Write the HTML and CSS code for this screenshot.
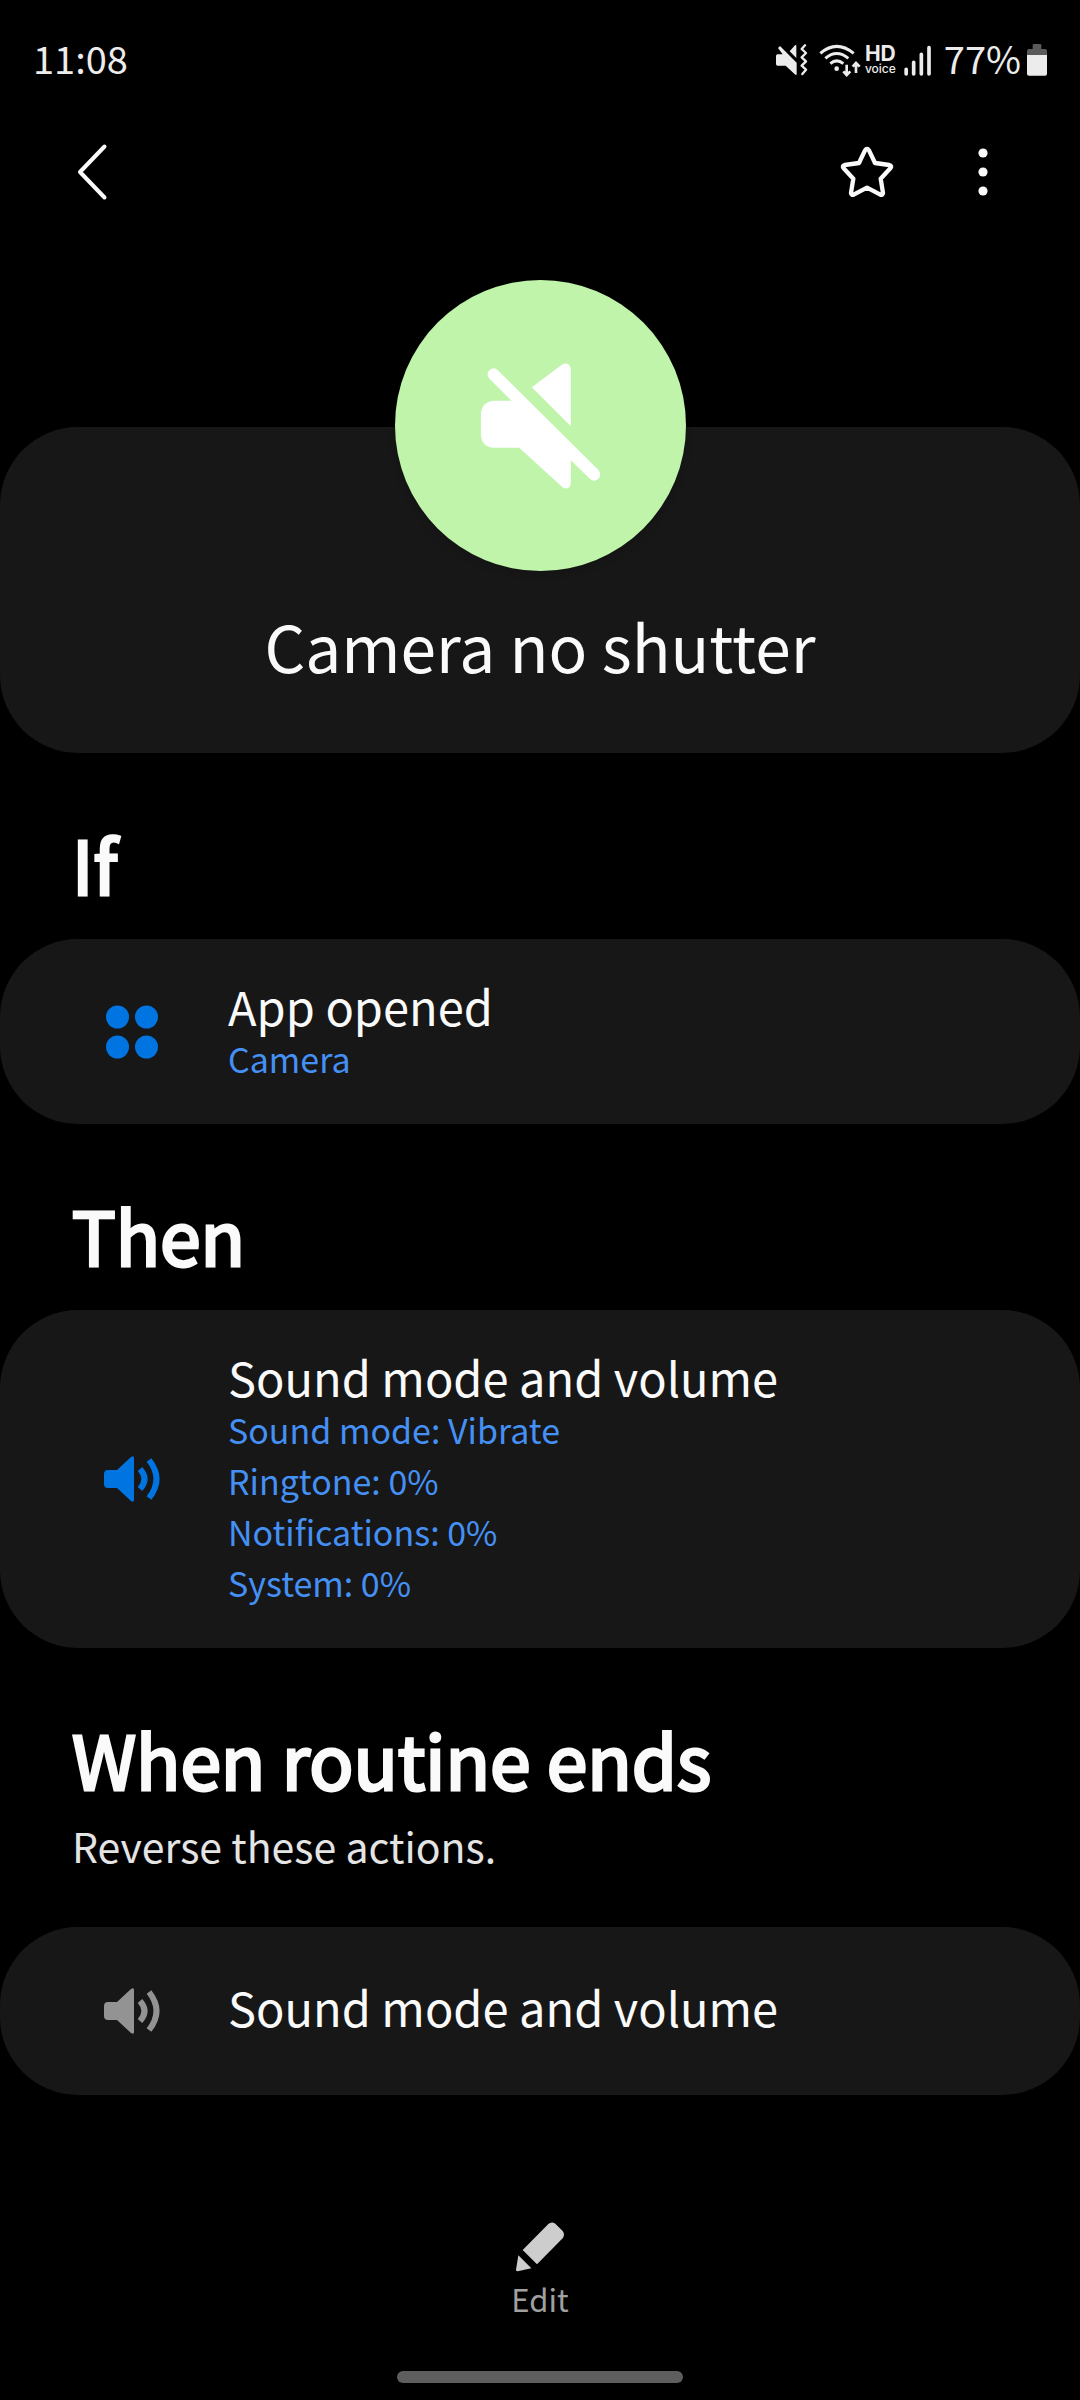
FILE: index.html
```html
<!DOCTYPE html>
<html lang="en">
<head>
<meta charset="utf-8">
<meta name="viewport" content="width=device-width, initial-scale=1">
<title>Camera no shutter</title>
<link rel="stylesheet" href="styles.css">
</head>
<body>
<div class="status">
  <time class="status__text">11:08</time>
  <div class="status__icons">
    <svg class="status__mute" viewBox="39 42 102 96" aria-hidden="true">
      <path d="M42 78q0-5 5-5h15L48 54l6-6 50 50v36h-4L71 107H47q-5 0-5-5zM83 64l16-18q4-2 4 2v36z" fill="#ececec"/>
      <path d="M129 46l-10 11 13 12-13 13 13 12-13 13 13 12-11 13" fill="none" stroke="#ececec" stroke-width="7" stroke-linejoin="round" stroke-linecap="round"/>
    </svg>
    <svg class="status__wifi" viewBox="171 39 126 99" aria-hidden="true">
      <g fill="none" stroke="#ececec" stroke-width="9">
        <path d="M175 67Q224 25 275 67M190 82Q224 53 259 82M205 98Q224 81 244 98"/>
        <path d="M254 101v28M244 121l10 11 11-11M282 126V98M272 107l10-11 11 11" stroke-width="8"/>
      </g>
      <circle cx="224" cy="113" r="7" fill="#ececec"/>
    </svg>
    <div class="hd"><span class="hd__top">HD</span><span class="hd__bottom">voice</span></div>
    <svg class="status__signal" viewBox="432 45 84 93" aria-hidden="true">
      <path d="M438.500 118v14M461 97v35M484 73v59M507 53v79" stroke="#ececec" stroke-width="11" stroke-linecap="round"/>
    </svg>
    <span class="status__text">77%</span>
    <svg class="status__battery" viewBox="801 42 60 96" aria-hidden="true">
      <path d="M818 57V46q0-4 4-4h18q4 0 4 4v11h11q6 0 6 6v14h-60V63q0-6 6-6z" fill="#5a5a5a"/>
      <path d="M801 75h60v56q0 6-6 6h-48q-6 0-6-6z" fill="#ececec"/>
    </svg>
  </div>
</div>

<header class="appbar">
  <button class="icon-btn" type="button" aria-label="Back">
    <svg class="icon-btn__svg" viewBox="0 0 64 64"><path d="M44.500 6.500L20 32l24.500 25.500" fill="none" stroke="#fafafa" stroke-width="4" stroke-linecap="round" stroke-linejoin="round"/></svg>
  </button>
  <div class="appbar__actions">
    <button class="icon-btn" type="button" aria-label="Add to favorites">
      <svg class="icon-btn__svg" viewBox="105 60 192 192"><path d="M195 91q6-9 12 0l18 38 43 6q9 3 3 10l-29 31 7 43q-1 8-8 5l-40-21-40 21q-7 3-8-5l7-43-29-31q-6-7 3-10l43-6z" fill="none" stroke="#fafafa" stroke-width="13" stroke-linejoin="round"/></svg>
    </button>
    <button class="icon-btn" type="button" aria-label="More options">
      <svg class="icon-btn__svg" viewBox="0 0 64 64" fill="#fafafa"><circle cx="32" cy="13" r="4.600"/><circle cx="32" cy="32" r="4.600"/><circle cx="32" cy="51" r="4.600"/></svg>
    </button>
  </div>
</header>

<main>
  <section class="card hero">
    <div class="hero__badge">
      <svg class="hero__svg" viewBox="41 29 874 874" fill="#fff" aria-hidden="true">
        <path d="M324 325q-11-15 1-26 13-11 25 1l302 300q11 14 0 26-12 11-25 1l-58-57v68q-2 24-24 14L414 533h-74q-40-2-41-40v-61q2-38 41-40h51z"/>
        <path d="M452 351l91-68q22-11 26 14v171z"/>
      </svg>
    </div>
    <h1 class="hero__title">Camera no shutter</h1>
  </section>

  <section>
    <h2 class="heading">If</h2>
    <div class="card row">
      <svg class="row__icon" viewBox="0 0 64 64" fill="#0074e0" aria-hidden="true"><circle cx="17.500" cy="17" r="11.500"/><circle cx="46.500" cy="17" r="11.500"/><circle cx="17.500" cy="47" r="11.500"/><circle cx="46.500" cy="47" r="11.500"/></svg>
      <div>
        <h3 class="row__title">App opened</h3>
        <p class="row__detail">Camera</p>
      </div>
    </div>
  </section>

  <section>
    <h2 class="heading">Then</h2>
    <div class="card row">
      <svg class="row__icon row__icon--active" viewBox="0 0 64 64" aria-hidden="true">
        <path d="M4 27q0-4 4-4h9L31 10q3-2 3 1v42q0 3-3 1L17 41H8q-4 0-4-4z" fill="currentColor"/>
        <path d="M40 22q9 10 0 20M49 13q15 19 0 38" fill="none" stroke="currentColor" stroke-width="6"/>
      </svg>
      <div>
        <h3 class="row__title">Sound mode and volume</h3>
        <p class="row__detail">Sound mode: Vibrate<br>Ringtone: 0%<br>Notifications: 0%<br>System: 0%</p>
      </div>
    </div>
  </section>

  <section>
    <h2 class="heading heading--with-note">When routine ends</h2>
    <p class="note">Reverse these actions.</p>
    <div class="card row row--single">
      <svg class="row__icon row__icon--muted" viewBox="0 0 64 64" aria-hidden="true">
        <path d="M4 27q0-4 4-4h9L31 10q3-2 3 1v42q0 3-3 1L17 41H8q-4 0-4-4z" fill="currentColor"/>
        <path d="M40 22q9 10 0 20M49 13q15 19 0 38" fill="none" stroke="currentColor" stroke-width="6"/>
      </svg>
      <h3 class="row__title">Sound mode and volume</h3>
    </div>
  </section>
</main>

<footer class="footer">
  <button class="edit" type="button">
    <svg class="edit__icon" viewBox="405 120 150 153" fill="#cdcdcd" aria-hidden="true">
      <path d="M428 207l77-78q10-9 21-1l22 22q8 11 0 22l-77 78zM415 223l39 39-41 9q-5 0-5-5z"/>
    </svg>
    <span>Edit</span>
  </button>
  <div class="home-bar"></div>
</footer>
</body>
</html>
```
FILE: styles.css
```css
* { box-sizing: border-box; }

body {
  margin: 0;
  min-height: 100vh;
  display: flex;
  flex-direction: column;
  background: #000;
  color: #fafafa;
  font-family: "Noto Sans CJK KR", "Noto Sans", sans-serif;
}

h1, h2, h3, p { margin: 0; font-weight: 400; }

button {
  padding: 0;
  border: 0;
  background: none;
  color: inherit;
  font: inherit;
}

svg { display: block; flex: none; }

/* Status bar */
.status {
  display: flex;
  justify-content: space-between;
  align-items: center;
  height: 120px;
  padding: 0 33px;
  color: #ececec;
}
.status__icons { display: flex; align-items: center; }
.status__text { padding-bottom: 4px; font-size: 38px; line-height: 52px; }
.status__mute { width: 34px; height: 32px; margin-right: 10px; }
.status__wifi { width: 42px; height: 33px; margin-right: 4px; }
.status__signal { width: 28px; height: 31px; margin: 0 12px 0 8px; }
.status__battery { width: 20px; height: 32px; margin-left: 6px; }

.hd {
  display: flex;
  flex-direction: column;
  align-items: center;
  font-family: Inter, sans-serif;
}
.hd__top { font-size: 21px; line-height: 18px; font-weight: 700; }
.hd__bottom { font-size: 12px; line-height: 12px; font-weight: 500; }

/* App bar */
.appbar {
  display: flex;
  justify-content: space-between;
  height: 104px;
  padding: 0 65px 0 60px;
}
.appbar__actions { display: flex; gap: 52px; }
.icon-btn { width: 64px; height: 104px; }
.icon-btn__svg { width: 64px; height: 64px; }

/* Cards */
.card {
  border-radius: 78px;
  background: #171717;
}

.hero {
  display: flex;
  flex-direction: column;
  align-items: center;
  gap: 35px;
  margin-top: 203px;
  padding-bottom: 69px;
}
.hero__badge {
  width: 291px;
  height: 291px;
  margin-top: -147px;
  border-radius: 50%;
  background: #bff4aa;
  box-shadow: 0 2px 8px rgba(0, 0, 0, 0.2);
}
.hero__svg { width: 100%; height: 100%; }
.hero__title { font-size: 64px; line-height: 78px; }

.heading {
  padding: 65px 72px 31px;
  font-size: 73px;
  line-height: 90px;
  -webkit-text-stroke: 3px currentColor;
}
.heading--with-note { padding-bottom: 12px; }

.note {
  padding: 0 72px 52px;
  color: #e4e4e4;
  font-size: 41px;
  line-height: 60px;
}

.row {
  display: flex;
  align-items: center;
  gap: 64px;
  padding: 40px 100px;
}
.row__icon { width: 64px; height: 64px; }
.row__icon--active { color: #0074e0; }
.row__icon--muted { color: #939393; }
.row__title { font-size: 47px; line-height: 54px; }
.row__detail {
  color: #4590f5;
  font-size: 34px;
  line-height: 51px;
}
.row--single { min-height: 168px; }
.row--single .row__title { padding-bottom: 8px; }

/* Bottom bar */
.footer {
  display: flex;
  flex-direction: column;
  align-items: center;
  gap: 49px;
  margin-top: auto;
  padding: 40px 0 17px;
}
.edit {
  display: flex;
  flex-direction: column;
  align-items: center;
  gap: 4px;
  color: #a0a0a0;
  font-size: 31px;
  line-height: 46px;
}
.edit__icon { width: 50px; height: 51px; }
.home-bar {
  width: 286px;
  height: 12px;
  border-radius: 6px;
  background: #5e5e5e;
}
```
